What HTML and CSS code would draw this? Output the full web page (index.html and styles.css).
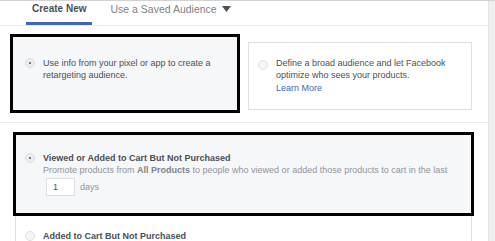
FILE: index.html
```html
<!DOCTYPE html>
<html>
<head lang="en">
    <meta charset="UTF-8">
    <title>Audience</title>
    <link rel="stylesheet" href="styles.css">
</head>
<body>
<div class="page">
    <div class="main">
        <div class="tabs">
            <div class="tab active">Create New</div>
            <div class="tab">Use a Saved Audience
                <svg class="caret" width="9" height="6" viewBox="0 0 9 6"><path d="M0 0h9L4.5 6z" fill="#4b4f56"/></svg>
            </div>
        </div>

        <div class="options">
            <div class="opt mark">
                <span class="radio on"></span>
                <p>Use info from your pixel or app to create a retargeting audience.</p>
            </div>
            <div class="opt card">
                <span class="radio"></span>
                <p>Define a broad audience and let Facebook optimize who sees your products.<br><a href="javascript:;">Learn More</a></p>
            </div>
        </div>

        <div class="sep"></div>

        <ul class="list">
            <li class="item mark">
                <span class="radio on"></span>
                <div class="body">
                    <div class="title">Viewed or Added to Cart But Not Purchased</div>
                    <div class="sub">Promote products from <b>All Products</b> to people who viewed or added those products to cart in the last</div>
                    <div class="days"><span class="num">1</span><span>days</span></div>
                </div>
            </li>
            <li class="item">
                <span class="radio"></span>
                <div class="body">
                    <div class="title">Added to Cart But Not Purchased</div>
                </div>
            </li>
        </ul>
    </div>
    <div class="scroll"></div>
</div>
</body>
</html>
```

FILE: styles.css
```css
*{
    margin: 0;
    padding: 0;
    list-style: none;
    box-sizing: border-box;
}
body{
    font-family: "Liberation Sans", Arial, sans-serif;
    font-size: 9px;
    color: #4b4f56;
    background: #fff;
}
.page{
    display: flex;
    height: 241px;
    border-top: 1px solid #d3d3d3;
    overflow: hidden;
}
.main{
    flex: 1;
}
.scroll{
    width: 7px;
    background: #efefef;
    border-left: 1px solid #e4e4e4;
}
.tabs{
    display: flex;
    gap: 12px;
    height: 25px;
    padding-left: 26px;
    border-bottom: 1px solid #e9ebee;
}
.tab{
    height: 24px;
    padding: 1px 6px 0;
    font-size: 10.5px;
    line-height: 14px;
    color: #7f8288;
    border-bottom: 3px solid transparent;
}
.tab.active{
    font-size: 10px;
    font-weight: bold;
    color: #4b4f56;
    border-bottom-color: #4267b2;
}
.caret{
    margin-left: 2px;
    vertical-align: 1px;
}
.options{
    display: flex;
    align-items: flex-start;
    gap: 8px;
    padding: 8px 0 0 10px;
}
.opt{
    display: flex;
    gap: 8px;
    line-height: 12px;
}
.opt.mark{
    width: 230px;
    height: 79px;
    padding: 20px 20px 0 12px;
    border: 3px solid #000;
    background: #f6f7f9;
}
.opt.card{
    width: 224px;
    height: 68px;
    margin-top: 8px;
    padding: 14px 20px 0 9px;
    border: 1px solid #dddfe2;
    background: #fff;
}
.opt.card .radio{
    margin-top: 3px;
}
.opt a{
    color: #4267b2;
    text-decoration: none;
    line-height: 14px;
}
.radio{
    flex: none;
    width: 10px;
    height: 10px;
    margin-top: 1px;
    border: 1px solid #dddfe2;
    border-radius: 50%;
    background: #f5f6f7;
    position: relative;
}
.radio.on{
    background: #ebedf0;
}
.radio.on:after{
    content: "";
    position: absolute;
    left: 3px;
    top: 3px;
    width: 2px;
    height: 2px;
    border-radius: 50%;
    background: #4b4f56;
}
.sep{
    margin-top: 9px;
    border-top: 1px solid #e9ebee;
}
.list{
    margin: 11px 0 0 15px;
    width: 457px;
    height: 140px;
    border: 1px solid #dddfe2;
}
.item{
    display: flex;
    gap: 8px;
    padding: 17px 10px 0 9px;
    line-height: 12px;
}
.item.mark{
    height: 78px;
    background: #f6f7f9;
    outline: 3px solid #000;
}
.item .radio{
    margin-top: 1px;
}
.title{
    font-weight: bold;
}
.sub{
    color: #90949c;
}
.sub b{
    color: #7f8288;
}
.days{
    display: flex;
    align-items: center;
    gap: 5px;
    margin: 2px 0 0 3px;
    color: #90949c;
}
.num{
    width: 29px;
    height: 18px;
    padding-left: 6px;
    line-height: 16px;
    border: 1px solid #dddfe2;
    background: #fff;
    color: #4b4f56;
}
.item + .item{
    padding-top: 17px;
}
```
